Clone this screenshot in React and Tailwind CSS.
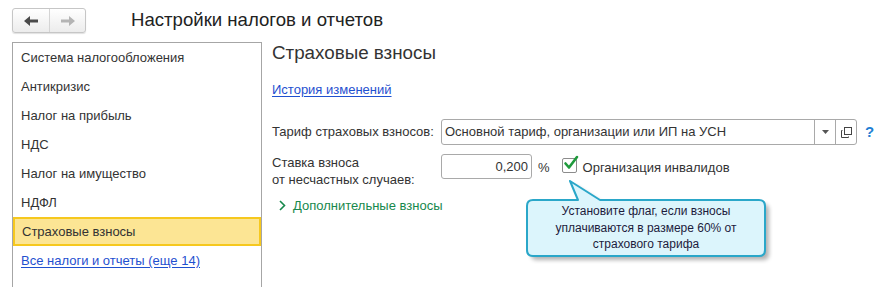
import React from 'react'

const MENU = [
  'Система налогообложения',
  'Антикризис',
  'Налог на прибыль',
  'НДС',
  'Налог на имущество',
  'НДФЛ',
]

function NavButtons() {
  return (
    <div className="flex h-[25px] w-[74px] rounded-[3px] border border-[#c6c6c6] bg-gradient-to-b from-white to-[#ececec] shadow-[0_1px_1px_rgba(0,0,0,0.12)]">
      <div className="flex w-[37px] items-center justify-center border-r border-[#d4d4d4]">
        <svg width="14" height="10" viewBox="0 0 14 10">
          <path d="M0 5 L6 0 L6 3.5 L14 3.5 L14 6.5 L6 6.5 L6 10 Z" fill="#4a4a4a" />
        </svg>
      </div>
      <div className="flex flex-1 items-center justify-center">
        <svg width="14" height="10" viewBox="0 0 14 10">
          <path d="M14 5 L8 0 L8 3.5 L0 3.5 L0 6.5 L8 6.5 L8 10 Z" fill="#b4b4b4" />
        </svg>
      </div>
    </div>
  )
}

function Callout() {
  const d =
    'M533 200 L578 200 L570 181 L600 200 L759 200 Q765 200 765 206 L765 250 Q765 256 759 256 L533 256 Q527 256 527 250 L527 206 Q527 200 533 200 Z'
  return (
    <div className="absolute left-[515px] top-[174px] h-[100px] w-[270px]">
      <svg width="270" height="100" viewBox="515 174 270 100" className="absolute left-0 top-0">
        <defs>
          <filter id="sh" x="-10%" y="-10%" width="130%" height="140%">
            <feGaussianBlur stdDeviation="2" />
          </filter>
        </defs>
        <path d={d} fill="#000" opacity="0.3" transform="translate(4 4)" filter="url(#sh)" />
        <path d={d} fill="#dcf5fc" stroke="#2aa7c9" strokeWidth="2" strokeLinejoin="round" />
      </svg>
      <div className="absolute left-[12px] top-[29px] w-[238px] text-center text-[12px] leading-[16.5px] text-[#1c1c3c]">
        Установите флаг, если взносы
        <br />
        уплачиваются в размере 60% от
        <br />
        страхового тарифа
      </div>
    </div>
  )
}

export default function App() {
  return (
    <div
      className="relative h-[287px] w-[877px] overflow-hidden bg-white text-[13px] text-[#333]"
      style={{ fontFamily: '"Liberation Sans", Arial, sans-serif' }}
    >
      <div className="flex h-[42px] items-start px-[12px] pt-[8px]">
        <NavButtons />
        <div className="ml-[45px] mt-[1px] text-[18.6px] leading-[22px] text-[#222]">
          Настройки налогов и отчетов
        </div>
      </div>

      <div className="flex">
        <div className="ml-[12px] h-[245px] w-[250px] border-l border-r border-t border-[#a6a6a6]">
          {MENU.map((item) => (
            <div key={item} className="flex h-[29px] items-center px-[8px]">
              {item}
            </div>
          ))}
          <div className="flex h-[29px] items-center border-2 border-[#f6c81e] bg-[#fce594] px-[7px]">
            Страховые взносы
          </div>
          <div className="flex h-[29px] items-center px-[8px]">
            <span className="text-[#1f50cf] underline underline-offset-2">Все налоги и отчеты (еще 14)</span>
          </div>
        </div>

        <div className="ml-[10px] flex-1">
          <div className="text-[18.8px] leading-[22px] text-[#333]">Страховые взносы</div>
          <div className="mt-[16px] leading-[20px]">
            <span className="text-[#1f50cf] underline underline-offset-2">История изменений</span>
          </div>

          <div className="mt-[19px] flex items-center">
            <div className="w-[169px]">Тариф страховых взносов:</div>
            <div className="flex h-[26px] w-[416px] rounded-[3px] border border-[#a9a9a9]">
              <div className="flex flex-1 items-center pl-[3px]">Основной тариф, организации или ИП на УСН</div>
              <div className="flex w-[21px] items-center justify-center border-l border-[#a9a9a9]">
                <svg width="7" height="4" viewBox="0 0 7 4">
                  <path d="M0 0 L7 0 L3.5 4 Z" fill="#555" />
                </svg>
              </div>
              <div className="flex w-[21px] items-center justify-center border-l border-[#a9a9a9]">
                <svg width="11" height="11" viewBox="0 0 11 11">
                  <rect x="3.5" y="0.5" width="7" height="7" fill="none" stroke="#444" />
                  <path d="M1.5 3.5 L0.5 3.5 L0.5 10.5 L7.5 10.5 L7.5 9.5" fill="none" stroke="#444" />
                </svg>
              </div>
            </div>
            <div className="ml-[8px] text-[15px] font-bold text-[#1f7fd4]">?</div>
          </div>

          <div className="mt-[9px] flex items-start">
            <div className="w-[169px] leading-[17px]">
              Ставка взноса
              <br />
              от несчастных случаев:
            </div>
            <div className="flex h-[25px] w-[91px] items-center justify-end rounded-[3px] border border-[#a9a9a9] pr-[3px]">
              0,200
            </div>
            <div className="ml-[6px] mt-[4px]">%</div>
            <div className="relative ml-[12px] mt-[4px] h-[15px] w-[15px] rounded-[2px] border border-[#8c8c8c] bg-white">
              <svg width="16" height="16" viewBox="0 0 16 16" className="absolute left-[0px] top-[-4px]">
                <path d="M2.5 8.5 L6 12.5 L14 2" fill="none" stroke="#1f9a3c" strokeWidth="2.6" strokeLinecap="round" strokeLinejoin="round" />
              </svg>
            </div>
            <div className="ml-[6px] mt-[4px]">Организация инвалидов</div>
          </div>

          <div className="mt-[8px] flex items-center pl-[7px] text-[#17884c]">
            <svg width="7" height="11" viewBox="0 0 7 11">
              <path d="M1 1 L5.5 5.5 L1 10" fill="none" stroke="#17884c" strokeWidth="1.6" />
            </svg>
            <span className="ml-[7px]">Дополнительные взносы</span>
          </div>
        </div>
      </div>

      <Callout />
    </div>
  )
}
